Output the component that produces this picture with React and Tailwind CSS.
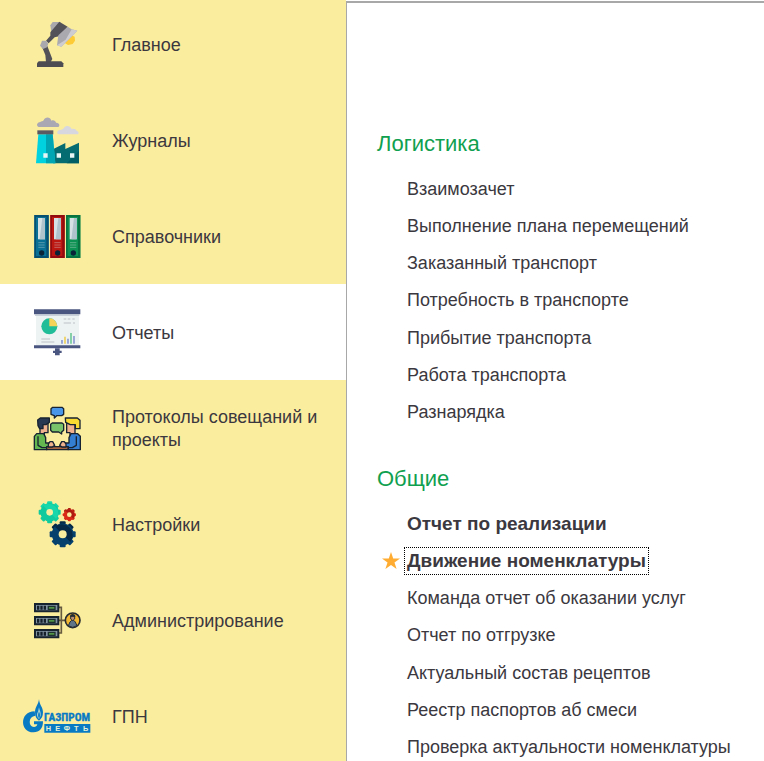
import React from "react";

function Icon({ viewBox, children }) {
  return (
    <svg viewBox={viewBox} className="h-[70px] w-20 shrink-0" aria-hidden="true">
      {children}
    </svg>
  );
}

function LampIcon() {
  return (
    <Icon viewBox="0 -3 240 210">
      <path d="M132 88 150 73 164 80 165 92 158 102 144 105 133 98Z" fill="#fdcb35" />
      <path d="M91 46 98 36H122L112 52 94 67Z" fill="#a9a8ad" />
      <path d="M118 35 143 50 117 79 104 82 86 100 78 92 91 77V67Z" fill="#535258" />
      <path d="M143 50 155 58 172 62 124 110 111 106 115 76Z" fill="#aaa9af" />
      <path d="M155 58 172 62 124 110 111 106 137 89Z" fill="#ccccd1" />
      <path d="M67 113 82 108 97 147 92 156H78L76 135Z" fill="#535258" />
      <path d="M66 92H79L85 101 81 112 69 117 60 107Z" fill="#a9a8ad" />
      <path d="M56 154H124L130 160V171H51V160Z" fill="#4c4c52" />
    </Icon>
  );
}

function FactoryIcon() {
  return (
    <Icon viewBox="0 0 240 210">
      <path d="M56 66C48 63 50 52 61 51 64 49 68 50 71 46 75 35 91 35 94 47 101 44 107 48 108 53 119 52 121 65 114 66Z" fill="#aaa8b3" />
      <path d="M117 88C108 86 111 74 122 75 126 72 130 74 132 68 138 59 151 62 155 72 163 69 169 73 170 78 178 80 177 88 172 88Z" fill="#d6d7df" />
      <path d="M100 132 136 114V132L177 113V175H99Z" fill="#056d72" />
      <path d="M140 175 177 138V175Z" fill="#005f66" />
      <path d="M55 88H98L106 175H48Z" fill="#00d2df" />
      <path d="M78 88H98L106 175H78Z" fill="#00a5b3" />
      <path d="M52 76H100V88H52Z" fill="#5b5962" />
      <path d="M70 145H83V158H70ZM110 145H123V158H110ZM150 145H163V158H150Z" fill="#e6f5f5" />
    </Icon>
  );
}

function Binder({ x, color, dark }) {
  return (
    <g transform={`translate(${x} 0)`}>
      <path d="M0 45H43V174H0Z" fill={color} />
      <path d="M0 45H43V174H36V51H5V168H36V174H0Z" fill={dark} />
      <path d="M11 54H32V118H11Z" fill="#d5e1e5" />
      <path d="M24 54H32V118H16Z" fill="#afc3cc" />
      <path d="M12 128H31M12 135H31M12 142H31" stroke="#d0d8d8" strokeWidth="2" opacity=".6" />
      <circle cx="22" cy="159" r="8" fill="#092438" />
    </g>
  );
}

function BindersIcon() {
  return (
    <Icon viewBox="0 3 240 210">
      <Binder x={43} color="#087094" dark="#064f70" />
      <Binder x={91} color="#bd1712" dark="#8f0b10" />
      <Binder x={138} color="#0c9252" dark="#087341" />
    </Icon>
  );
}

function ReportIcon() {
  return (
    <Icon viewBox="0 -3 240 210">
      <path d="M48 48H177V144H48Z" fill="#edf2f2" />
      <path d="M42 34H181V49H42Z" fill="#4b5680" />
      <path d="M45 49H178V53H45Z" fill="#bcc5d0" />
      <circle cx="88" cy="85" r="24" fill="#20bd98" />
      <path d="M88 85V61A24 24 0 0 1 112 85Z" fill="#f8d35a" />
      <path d="M131 63H139M143 63H151M157 63H164M131 75H153M159 75H165M64 123H90M64 132H103" stroke="#cdd4d6" strokeWidth="4" />
      <path d="M126 137V126M144 137V122M162 137V114" stroke="#8c9ad0" strokeWidth="5" />
      <path d="M135 137V116" stroke="#efd05b" strokeWidth="5" />
      <path d="M153 137V105" stroke="#72c998" strokeWidth="5" />
      <path d="M42 142H181V151H42Z" fill="#4b5680" />
      <path d="M105 151H119V158H125V165H119V172H105V165H99V158H105Z" fill="#4b5680" />
    </Icon>
  );
}

function MeetingIcon() {
  return (
    <Icon viewBox="0 -6 240 210">
      <g stroke="#182331" strokeWidth="4" strokeLinejoin="round">
        <path d="M60 82H84V113H73V121H60Z" fill="#efb18e" />
        <path d="M140 82H165V121H150V113H140Z" fill="#efb18e" />
        <path d="M53 75 61 69H88V82L78 89H69V101H59L54 92Z" fill="#293852" />
        <path d="M136 69H172L180 76V101H166V89H151L137 82Z" fill="#f8da31" />
        <path d="M43 164V124L50 116H71L77 128V144H98V155H80V164Z" fill="#63b650" />
        <path d="M181 164V124L173 116H153L147 128V144H126V155H145V164Z" fill="#347ed2" />
        <path d="M54 124V151L66 158H81M169 124V151L157 158H143" fill="none" />
        <path d="M80 155H144V164H80Z" fill="#a66440" />
        <path d="M85 147 90 140H98L104 151 97 156H85ZM138 147 133 140H125L119 151 126 156H138Z" fill="#f1b28e" />
        <path d="M98 37H126L131 41V58L125 62H110L103 69V62L93 58V41Z" fill="#4996e9" />
        <path d="M97 84H126L131 88V106L125 111V117L116 111H97L92 106V88Z" fill="#79c46b" />
      </g>
    </Icon>
  );
}

const gearTeeth = [0, 45, 90, 135, 180, 225, 270, 315];

function Gear({ x, y, outer, hole, color, shade }) {
  return (
    <g transform={`translate(${x} ${y})`}>
      {gearTeeth.map((angle) => (
        <rect key={angle} x={-outer * 0.23} y={-outer} width={outer * 0.46} height={outer * 0.4} rx="3" fill={angle < 90 || angle > 270 ? shade : color} transform={`rotate(${angle})`} />
      ))}
      <circle r={outer * 0.84} fill={color} />
      <path d={`M${-outer * 0.59} ${-outer * 0.59}A${outer * 0.84} ${outer * 0.84} 0 0 1 ${outer * 0.59} ${outer * 0.59}Z`} fill={shade} />
      <circle r={hole} fill="#fbed9e" />
    </g>
  );
}

function SettingsIcon() {
  return (
    <Icon viewBox="0 -3 240 210">
      <Gear x={89} y={67} outer={33} hole={10} color="#11ca9d" shade="#18d8ab" />
      <Gear x={148} y={74} outer={20} hole={7} color="#d92a18" shade="#ac1a10" />
      <Gear x={128} y={133} outer={39} hole={12} color="#06416e" shade="#052947" />
    </Icon>
  );
}

function ServerIcon() {
  return (
    <Icon viewBox="0 -15 240 210">
      <path d="M116 52H124V129H116M116 91H139" fill="none" stroke="#665a40" strokeWidth="5" />
      {[40, 79, 118].map((y) => (
        <g key={y}>
          <path d={`M45 ${y + 2}H115V${y + 24}H45Z`} fill="#8293a1" stroke="#17232e" strokeWidth="6" />
          <path d={`M51 ${y + 13}H80`} stroke="#15202a" strokeWidth="12" strokeDasharray="7 3" />
          <path d={`M85 ${y + 9}H105V${y + 18}H85Z`} fill="#519347" stroke="#1e302f" strokeWidth="4" />
        </g>
      ))}
      <circle cx="158" cy="91" r="22" fill="#f3b832" stroke="#252b30" strokeWidth="5" />
      <path d="M145 107 150 96 155 91H161L166 96 171 107 158 112Z" fill="#617588" stroke="#25303b" strokeWidth="3" />
      <path d="M152 79H164V87L158 92 152 87Z" fill="#b98d70" stroke="#25303b" strokeWidth="3" />
      <path d="M150 81C148 69 168 69 166 81L158 78Z" fill="#202b34" />
    </Icon>
  );
}

function GazpromIcon() {
  return (
    <Icon viewBox="30 -27 240 210">
      <path d="M74 64C28 64 28 128 71 127 88 126 99 117 99 94H72V103H82C80 114 64 114 60 102 57 88 63 79 76 77Z" fill="#087ac4" />
      <path d="M87 27C86 43 75 49 75 67 75 80 80 87 87 92 95 86 99 79 99 67 99 51 88 45 87 27Z" fill="#087ac4" />
      <path d="M87 52C88 61 94 67 92 77L87 88C80 79 79 72 84 65Z" fill="#a9d2cf" />
      <path d="M87 65C91 72 91 79 87 86 83 78 84 71 87 65Z" fill="#087ac4" />
      <path d="M103 102H241V128H103Z" fill="#087ac4" />
      <text x="102" y="94" fill="#087ac4" stroke="#087ac4" strokeWidth="1" className="font-['Roboto_Condensed','Roboto',sans-serif] text-[34px] font-bold">ГАЗПРОМ</text>
      {["Н", "Е", "Ф", "Т", "Ь"].map((letter, index) => (
        <text key={letter} x={115 + index * 28} y="123" textAnchor="middle" fill="#e4f1d7" className="font-['Liberation_Sans',Arial,sans-serif] text-[22px] font-bold">{letter}</text>
      ))}
    </Icon>
  );
}

const sections = [
  { label: "Главное", icon: LampIcon },
  { label: "Журналы", icon: FactoryIcon },
  { label: "Справочники", icon: BindersIcon },
  { label: "Отчеты", icon: ReportIcon, active: true },
  { label: "Протоколы совещаний и проекты", icon: MeetingIcon },
  { label: "Настройки", icon: SettingsIcon },
  { label: "Администрирование", icon: ServerIcon },
  { label: "ГПН", icon: GazpromIcon },
];

const groups = [
  {
    title: "Логистика",
    reports: [
      { label: "Взаимозачет" },
      { label: "Выполнение плана перемещений" },
      { label: "Заказанный транспорт" },
      { label: "Потребность в транспорте" },
      { label: "Прибытие транспорта" },
      { label: "Работа транспорта" },
      { label: "Разнарядка" },
    ],
  },
  {
    title: "Общие",
    reports: [
      { label: "Отчет по реализации", bold: true },
      { label: "Движение номенклатуры", bold: true, favorite: true },
      { label: "Команда отчет об оказании услуг" },
      { label: "Отчет по отгрузке" },
      { label: "Актуальный состав рецептов" },
      { label: "Реестр паспортов аб смеси" },
      { label: "Проверка актуальности номенклатуры" },
    ],
  },
];

function Report({ label, bold, favorite }) {
  return (
    <li className="flex items-center">
      <span className="flex w-[27px] shrink-0 justify-center">
        {favorite && (
          <svg viewBox="0 0 18 18" className="h-[18px] w-[18px]" aria-label="Избранное">
            <path d="M9 0 11.2 6.4H18L12.5 10.4 14.6 17 9 13 3.4 17 5.5 10.4 0 6.4H6.8Z" fill="#ffad32" />
          </svg>
        )}
      </span>
      <a
        href="#"
        className={`border border-dotted px-0.5 leading-[26px] whitespace-nowrap ${bold ? "text-[19px] font-bold" : "text-[18px]"} ${favorite ? "border-black" : "border-transparent"}`}
      >
        {label}
      </a>
    </li>
  );
}

export default function App() {
  return (
    <div className="flex h-screen overflow-hidden bg-white font-['Liberation_Sans',Arial,sans-serif] text-[#3b3840]">
      <nav className="w-[346px] shrink-0 bg-[#fbed9e]">
        <ul className="-mt-1">
          {sections.map(({ label, icon: SectionIcon, active }) => (
            <li key={label}>
              <button
                type="button"
                className={`flex h-24 w-full items-center gap-3 pr-4 pl-5 text-left text-[18px] leading-[23px] ${active ? "bg-white" : ""}`}
              >
                <SectionIcon />
                <span className="pt-0.5">{label}</span>
              </button>
            </li>
          ))}
        </ul>
      </nav>
      <main className="mt-px min-w-0 flex-1 border-t-2 border-l border-[#a8a8a8] pt-[126px] pl-[30px]">
        {groups.map(({ title, reports }) => (
          <section key={title} className="mb-[33px]">
            <h2 className="text-[22px] leading-[30px] text-[#0fa050]">{title}</h2>
            <ul className="mt-[11px] grid min-h-[261px] auto-rows-fr">
              {reports.map((report) => (
                <Report key={report.label} {...report} />
              ))}
            </ul>
          </section>
        ))}
      </main>
    </div>
  );
}
